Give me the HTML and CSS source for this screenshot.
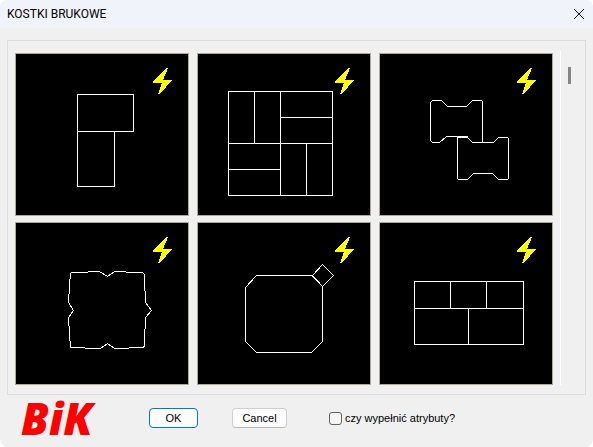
FILE: index.html
```html
<!DOCTYPE html>
<html lang="pl">
<head>
  <meta charset="UTF-8">
  <meta name="viewport" content="width=device-width, initial-scale=1.0">
  <title>KOSTKI BRUKOWE</title>
  <link rel="stylesheet" href="styles.css">
</head>
<body>

<div class="dialog">
  <header class="titlebar">
    <h1>KOSTKI BRUKOWE</h1>
    <button class="close-btn" type="button" aria-label="Zamknij">
      <svg width="12" height="12" viewBox="0 0 12 12"><path d="M1 1L11 11M11 1L1 11"/></svg>
    </button>
  </header>

  <svg class="symbols" width="0" height="0">
    <symbol id="bolt" viewBox="0 0 172 161">
      <path d="M150 14L152 14L147 26L156 26L144 40L142 40L146 29L137 29L137 28Z"/>
    </symbol>
  </svg>

  <main class="group">
    <div class="tiles">
      <button class="tile" type="button" aria-label="Kostka 1">
        <svg viewBox="0 0 172 161">
          <path d="M61.5 40.5H117.5V77.5H61.5ZM61.5 77.5V132.5H98.5V77.5"/>
          <use class="bolt" href="#bolt" width="172" height="161"/>
        </svg>
      </button>
      <button class="tile" type="button" aria-label="Kostka 2">
        <svg viewBox="0 0 172 161">
          <path d="M30.5 37.5H134.5V141.5H30.5ZM82.5 37.5V141.5M30.5 89.5H134.5M56.5 37.5V89.5M82.5 63.5H134.5M30.5 115.5H82.5M108.5 89.5V141.5"/>
          <use class="bolt" href="#bolt" width="172" height="161"/>
        </svg>
      </button>
      <button class="tile" type="button" aria-label="Kostka 3">
        <svg viewBox="0 0 172 161">
          <path d="M102.5 88.5V47.5L101.5 46.5H92.5L86.5 52.5H67.5L61.5 46.5H52.5L50.5 48.5V86.5L52.5 88.5H59.5L66.5 82.5H87.5"/>
          <path d="M77.5 83.5H87.5L92.5 88.5H113.5L118.5 83.5H127.5L128.5 84.5V124.5L127.5 125.5H118.5L112.5 119.5H93.5L87.5 125.5H78.5L77.5 124.5Z"/>
          <use class="bolt" href="#bolt" width="172" height="161"/>
        </svg>
      </button>
      <button class="tile" type="button" aria-label="Kostka 4">
        <svg viewBox="0 0 172 161">
          <path d="M54.5 50.5L55.5 49.5H71.5L72.5 48.5H83.5L91.5 53.5L98.5 48.5H109.5L110.5 49.5H126.5L128.5 51.5V67.5L129.5 68.5V79.5L135.5 87.5L129.5 94.5V105.5L128.5 106.5V122.5L127.5 124.5H113.5L112.5 125.5H98.5L91.5 120.5L84.5 125.5H69.5L68.5 124.5H54.5V118.5L53.5 117.5V103.5L52.5 102.5V94.5L57.5 87.5L52.5 79.5V71.5L53.5 70.5V56.5L54.5 55.5Z"/>
          <use class="bolt" href="#bolt" width="172" height="161"/>
        </svg>
      </button>
      <button class="tile" type="button" aria-label="Kostka 5">
        <svg viewBox="0 0 172 161">
          <path d="M58.5 52.5H113.5L124.5 63.5V118.5L113.5 129.5H58.5L47.5 118.5V64.5Z"/>
          <path d="M124.5 41.5L135.5 52.5L124.5 63.5L114.5 52.5Z"/>
          <use class="bolt" href="#bolt" width="172" height="161"/>
        </svg>
      </button>
      <button class="tile" type="button" aria-label="Kostka 6">
        <svg viewBox="0 0 172 161">
          <path d="M34.5 58.5H143.5V121.5H34.5ZM34.5 85.5H143.5M70.5 58.5V85.5M106.5 58.5V85.5M88.5 85.5V121.5"/>
          <use class="bolt" href="#bolt" width="172" height="161"/>
        </svg>
      </button>
    </div>
    <div class="scrollbar"><div class="thumb"></div></div>
  </main>

  <footer class="actions">
    <div class="logo">BiK</div>
    <button class="btn btn-ok" type="button">OK</button>
    <button class="btn btn-cancel" type="button">Cancel</button>
    <label class="check" for="fill-attributes">
      <input type="checkbox" id="fill-attributes">
      czy wypełnić atrybuty?
    </label>
  </footer>
</div>

</body>
</html>
```

FILE: styles.css
```css
body {
  margin: 0;
  background-color: #fff;
  font-family: "Liberation Sans", Arial, sans-serif;
  font-size: 11px;
  color: #000;
}

button {
  font: inherit;
  color: inherit;
  padding: 0;
}

.dialog {
  display: flex;
  flex-direction: column;
  min-height: 100vh;
  border-radius: 8px;
  background-color: #f0f0f0;
  overflow: hidden;
}

.titlebar {
  display: flex;
  align-items: center;
  justify-content: space-between;
  height: 28px;
  padding: 0 8px 0 7px;
  background-color: #f0f3f9;
}

.titlebar h1 {
  margin: 0;
  font-family: Roboto, sans-serif;
  font-size: 12px;
  font-weight: 400;
}

.close-btn {
  display: flex;
  border: none;
  background: none;
}

.close-btn svg {
  fill: none;
  stroke: #111;
}

.symbols {
  position: absolute;
}

.group {
  display: flex;
  margin: 12px 7px 0;
  border: 1px solid #dcdcdc;
  padding: 9px 0 9px 7px;
}

.tiles {
  flex: 1;
  display: grid;
  grid-template-columns: repeat(3, 1fr);
  gap: 6px 8px;
  padding-top: 3px;
}

.tile {
  border: 1px solid #aca899;
  background-color: #000;
}

.tile svg {
  display: block;
  width: 100%;
  height: 161px;
  fill: none;
  stroke: #fff;
  shape-rendering: crispEdges;
}

.tile .bolt {
  fill: #ff0;
  stroke: none;
}

.scrollbar {
  width: 24px;
  margin-left: 7px;
  border-left: 1px solid #fff;
}

.thumb {
  width: 3px;
  height: 17px;
  margin: 17px 0 0 7px;
  background-color: #858585;
}

.actions {
  display: flex;
  align-items: center;
  padding: 0 21px;
  height: 46px;
}

.logo {
  width: 128px;
  font-family: "Open Sans", sans-serif;
  font-size: 44px;
  font-weight: 800;
  font-style: italic;
  line-height: 46px;
  color: #f00;
}

.btn {
  height: 20px;
  border: 1px solid #d0d0d0;
  border-bottom-color: #bbb;
  border-radius: 4px;
  background-color: #fdfdfd;
}

.btn-ok {
  width: 49px;
  margin-right: 34px;
  border-color: #0078d4;
}

.btn-cancel {
  width: 55px;
  margin-right: 42px;
}

.check {
  display: flex;
  align-items: center;
  gap: 3px;
}

.check input {
  appearance: none;
  width: 13px;
  height: 13px;
  margin: 0;
  border: 1px solid #626262;
  border-radius: 3px;
  background-color: #f5f5f5;
}

.check input:checked {
  background-color: #0078d4;
}
```
